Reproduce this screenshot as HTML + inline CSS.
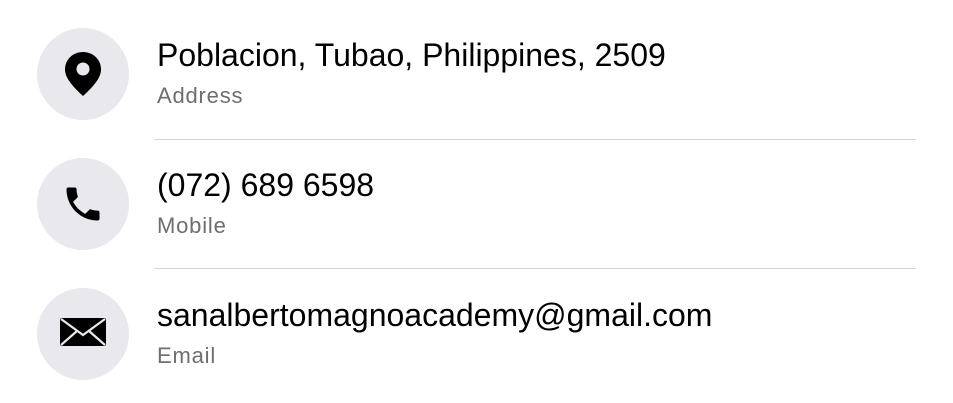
<!DOCTYPE html>
<html><head><style>
body{margin:0;width:953px;height:403px;background:#fff;font-family:"Liberation Sans",Arial,sans-serif;position:relative;overflow:hidden}
.c{position:absolute;left:37px;width:92px;height:92px;border-radius:50%;background:#e8e8ed}
.c svg{position:absolute}
.t{position:absolute;left:157px;font-size:32px;color:#000;white-space:nowrap}
.s{position:absolute;left:157px;font-size:22px;letter-spacing:0.8px;color:#6d6d72;white-space:nowrap}
.d{position:absolute;left:154px;width:762px;height:1px;background:#d6d6d8}
</style></head><body>
<div class="c" style="top:28px"><svg style="left:27px;top:23px" width="38" height="46" viewBox="0 0 38 46"><path d="M19 1C9 1 1 8.5 1 18.5c0 9.5 10 19 18 26.5C27 37.5 37 28 37 18.5 37 8.5 29 1 19 1z" fill="#000"/><circle cx="19" cy="18" r="6.5" fill="#e8e8ed"/></svg></div>
<div class="t" style="top:37px">Poblacion, Tubao, Philippines, 2509</div>
<div class="s" style="top:83px">Address</div>
<div class="d" style="top:139px"></div>
<div class="c" style="top:158px"><svg style="left:24px;top:24px" width="44" height="44" viewBox="0 0 24 24"><path fill="#000" d="M6.6 10.8c1.4 2.8 3.8 5.1 6.6 6.6l2.2-2.2c.3-.3.7-.4 1-.2 1.1.4 2.3.6 3.6.6.6 0 1 .4 1 1V20c0 .6-.4 1-1 1C10.6 21 3 13.4 3 4c0-.6.4-1 1-1h3.5c.6 0 1 .4 1 1 0 1.3.2 2.5.6 3.6.1.3 0 .7-.2 1z"/></svg></div>
<div class="t" style="top:167px">(072) 689 6598</div>
<div class="s" style="top:213px">Mobile</div>
<div class="d" style="top:268px"></div>
<div class="c" style="top:288px"><svg style="left:23px;top:30px" width="46" height="28" viewBox="0 0 46 28"><rect x="0" y="0" width="46" height="28" rx="2" fill="#000"/><path d="M1 1 L23 17 L45 1 M1 27 L17 13 M45 27 L29 13" stroke="#e8e8ed" stroke-width="2.2" fill="none"/></svg></div>
<div class="t" style="top:297px">sanalbertomagnoacademy@gmail.com</div>
<div class="s" style="top:343px">Email</div>
</body></html>
